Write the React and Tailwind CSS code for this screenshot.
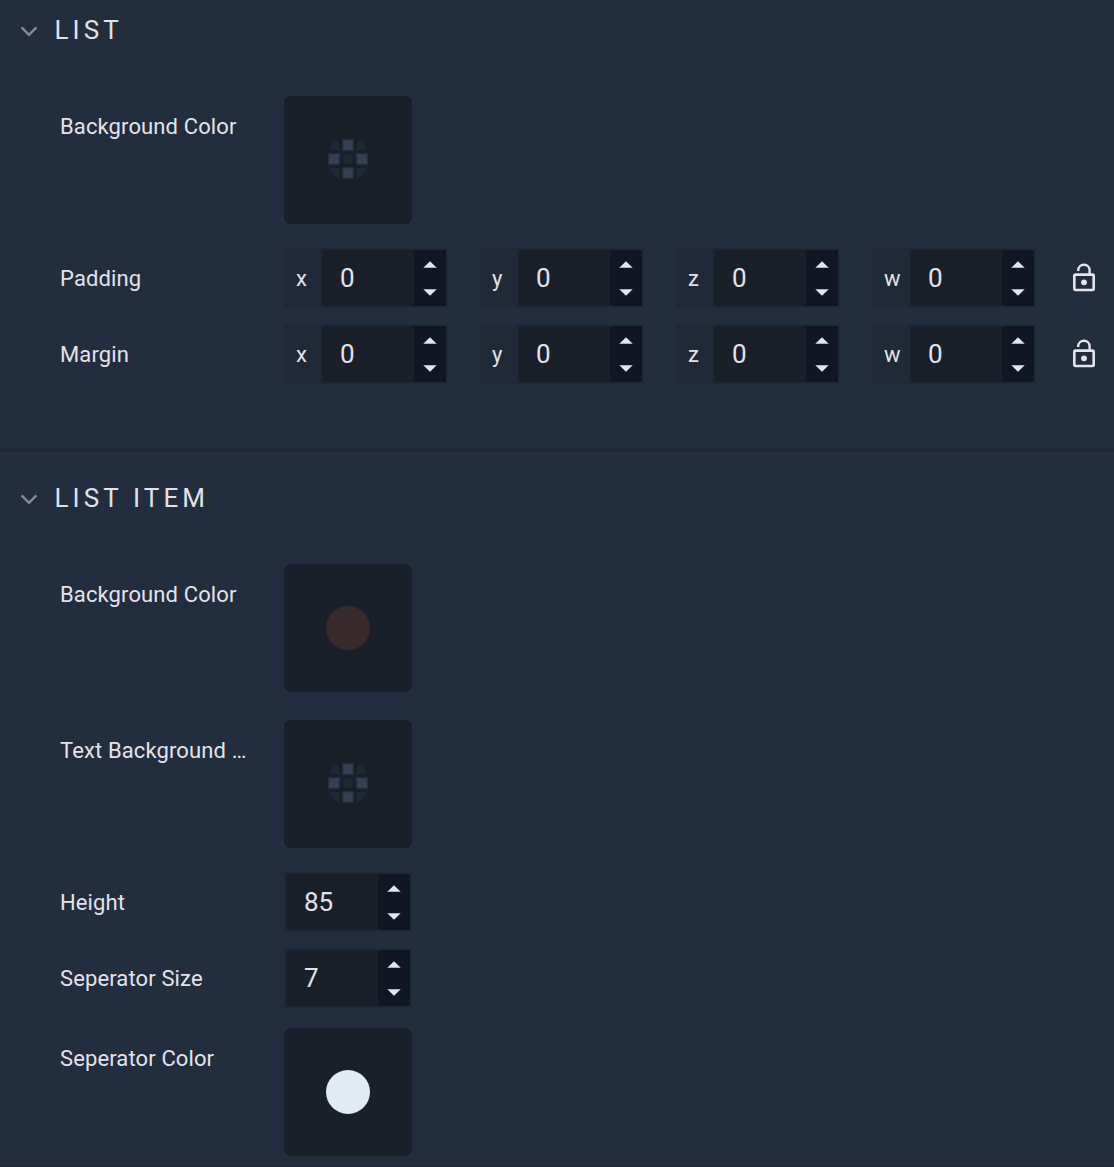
function Chevron() {
  return (
    <svg width="18" height="12" viewBox="0 0 18 12" className="mt-[3px] shrink-0" fill="none">
      <path d="M1.6 1.4 L9 8.8 L16.4 1.4" stroke="#858a97" strokeWidth="2.5" />
    </svg>
  );
}

function Header({ title }) {
  return (
    <div className="flex h-[60px] items-center gap-[15px] pl-5 text-[26px] tracking-[4.1px] text-[#e2e1e8]">
      <Chevron />
      <h2 className="pl-[1.5px] pt-px">{title}</h2>
    </div>
  );
}

function Label({ children }) {
  return (
    <div className="h-[60px] w-[224px] shrink-0 whitespace-nowrap pt-px text-[22px] leading-[60px] tracking-[0.12px]">
      {children}
    </div>
  );
}

function Checker() {
  return (
    <svg width="44" height="44" viewBox="0 0 44 44" className="mb-0.5">
      <g fill="#1e2935">
        <path d="M13 3V13H3Q5 5.5 13 3Z" />
        <path d="M31 3V13H41Q39 5.5 31 3Z" />
        <path d="M13 41V31H3Q5 38.5 13 41Z" />
        <path d="M31 41V31H41Q39 38.5 31 41Z" />
        <rect x="17.5" y="17.5" width="9" height="9" />
      </g>
      <g fill="#364055" stroke="#283143" strokeWidth="1">
        <rect x="16.8" y="2.8" width="10.4" height="10.4" />
        <rect x="2.8" y="16.8" width="10.4" height="10.4" />
        <rect x="30.8" y="16.8" width="10.4" height="10.4" />
        <rect x="16.8" y="30.8" width="10.4" height="10.4" />
      </g>
    </svg>
  );
}

function Swatch({ children }) {
  return (
    <div className="flex size-32 items-center justify-center rounded-md bg-[#1a2029]">
      {children}
    </div>
  );
}

function Stepper() {
  return (
    <div className="flex w-8 flex-col items-center justify-between bg-[#101623] pb-2.5 pt-[11px]">
      <svg width="14" height="8" viewBox="0 0 14 8">
        <path d="M0.3 6.8 L7 0.2 L13.7 6.8Z" fill="#e6e4ec" />
      </svg>
      <svg width="14" height="8" viewBox="0 0 14 8">
        <path d="M0.3 1.2 L7 7.8 L13.7 1.2Z" fill="#e6e4ec" />
      </svg>
    </div>
  );
}

function NumberField({ axis, value }) {
  return (
    <div className="flex h-[60px] border-2 border-[#1f2937] bg-[#1f2937]">
      {axis && <div className="flex w-9 items-center pl-2.5 text-[22px]">{axis}</div>}
      <div className="flex w-[92px] items-center bg-[#1a2029] pl-[18px] pt-px text-[26px]">{value}</div>
      <Stepper />
    </div>
  );
}

function Unlock() {
  return (
    <svg width="24" height="30" viewBox="0 0 24 30" fill="none" className="ml-9">
      <rect x="2.3" y="11.6" width="19.4" height="15.4" rx="1.2" stroke="#e6e4ec" strokeWidth="2.6" />
      <path d="M6.2 7.9V7.3C6.2 4 8.8 1.7 12 1.7S17.6 4 17.6 7.3V11.5" stroke="#e6e4ec" strokeWidth="2.4" />
      <circle cx="12" cy="19.3" r="2.9" fill="#e6e4ec" />
    </svg>
  );
}

function VectorRow({ label }) {
  return (
    <div className="flex items-center">
      <Label>{label}</Label>
      <div className="flex gap-8">
        {["x", "y", "z", "w"].map((axis) => (
          <NumberField key={axis} axis={axis} value="0" />
        ))}
      </div>
      <Unlock />
    </div>
  );
}

function SwatchRow({ label, children }) {
  return (
    <div className="flex">
      <Label>{label}</Label>
      <Swatch>{children}</Swatch>
    </div>
  );
}

function NumberRow({ label, value }) {
  return (
    <div className="flex">
      <Label>{label}</Label>
      <NumberField value={value} />
    </div>
  );
}

export default function App() {
  return (
    <main className="h-[1167px] w-[1114px] overflow-hidden bg-[#222d3d] font-['Roboto',sans-serif] text-[#e4e3ea]">
      <section className="h-[452px] border-b-4 border-[#1d2735]">
        <Header title="LIST" />
        <div className="flex flex-col gap-4 pl-[60px] pt-9">
          <div className="mb-2">
            <SwatchRow label="Background Color">
              <Checker />
            </SwatchRow>
          </div>
          <VectorRow label="Padding" />
          <VectorRow label="Margin" />
        </div>
      </section>
      <section className="h-[718px] border-b-4 border-[#1d2735] pt-4">
        <Header title="LIST ITEM" />
        <div className="flex flex-col pl-[60px] pt-9">
          <SwatchRow label="Background Color">
            <div className="size-11 rounded-full bg-[#382a2a]" />
          </SwatchRow>
          <div className="mb-6 mt-7">
            <SwatchRow label="Text Background …">
              <Checker />
            </SwatchRow>
          </div>
          <div className="mb-5 flex flex-col gap-4">
            <NumberRow label="Height" value="85" />
            <NumberRow label="Seperator Size" value="7" />
          </div>
          <SwatchRow label="Seperator Color">
            <div className="size-11 rounded-full bg-[#e1ebf4]" />
          </SwatchRow>
        </div>
      </section>
    </main>
  );
}
